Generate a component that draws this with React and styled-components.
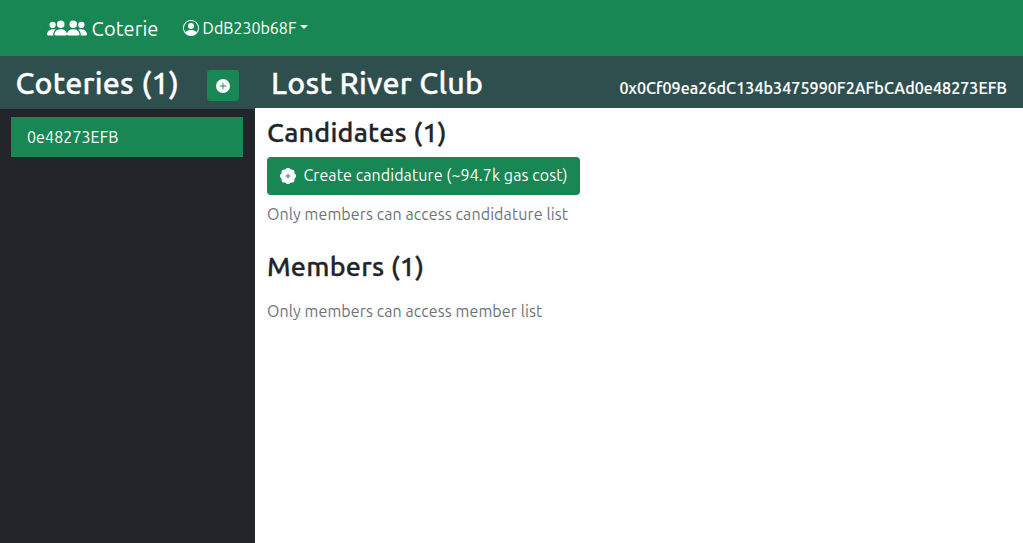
import React from "react";
import styled, { createGlobalStyle } from "styled-components";
import { BsPeopleFill, BsPersonCircle, BsPlusCircleFill, BsPatchPlusFill } from "react-icons/bs";

const GlobalStyle = createGlobalStyle`
  *, *::before, *::after { box-sizing: border-box; }
  body {
    margin: 0;
    overflow: hidden;
    background: #fff;
    color: #212529;
    font: 400 16px/24px Ubuntu, "Noto Sans", sans-serif;
    letter-spacing: 0.09px;
  }
  svg { flex: none; display: block; }
  h1, h2, p { margin: 0; white-space: nowrap; }
  button { font: inherit; letter-spacing: inherit; border: 0; cursor: pointer; }
`;

const Page = styled.div`
  height: 100vh;
  display: flex;
  flex-direction: column;
`;

const Navbar = styled.nav`
  height: 56px;
  flex: none;
  display: flex;
  align-items: center;
  padding-left: 47px;
  background: #198754;
  color: #fff;
`;

const Brand = styled.div`
  width: 136px;
  display: flex;
  align-items: center;
  font-size: 20px;
  line-height: 30px;
  padding-top: 1px;

  svg { margin-bottom: 1px; }
`;

const FlippedPeople = styled(BsPeopleFill)`
  transform: scaleX(-1);
`;

const Label = styled.span`
  white-space: nowrap;
  margin-left: ${(p) => p.$gap || 0}px;
`;

const Account = styled.div`
  display: flex;
  align-items: center;
  letter-spacing: 0;
`;

const Caret = styled.i`
  margin: 0 0 2px 4px;
  border: 4.8px solid transparent;
  border-top-color: #fff;
  border-bottom: 0;
`;

const Body = styled.div`
  flex: 1;
  display: flex;
  min-height: 0;
`;

const Sidebar = styled.aside`
  width: 255px;
  flex: none;
  background: #212529;
`;

const Main = styled.main`
  flex: 1;
  min-width: 0;
`;

const Header = styled.header`
  height: ${(p) => p.$height}px;
  padding: 0 16px 0 ${(p) => p.$left}px;
  display: flex;
  justify-content: space-between;
  background: #2f4f4f;
  color: #fff;
`;

const Title = styled.h1`
  font-size: calc(1.325rem + 0.9vw);
  line-height: 38px;
  padding-top: 8px;
  font-weight: 500;
  letter-spacing: 0.24px;
  -webkit-text-stroke: 0.3px currentColor;
`;

const AddButton = styled.button`
  width: 32px;
  height: 31px;
  margin-top: 14px;
  padding: 1px 0 0;
  display: grid;
  place-items: center;
  border-radius: 3.2px;
  background: #198754;
  color: #fff;
`;

const Address = styled.p`
  padding-top: 20px;
  font-weight: 500;
  -webkit-text-stroke: 0.15px currentColor;
`;

const CoterieItem = styled.div`
  height: 40px;
  margin: 8px 12px 0 11px;
  padding: 8px 16px;
  background: #198754;
  color: #fff;
`;

const Content = styled.div`
  padding: 8px 12px;
`;

const Section = styled.section`
  margin-bottom: 24px;
`;

const Heading = styled.h2`
  font-size: calc(1.3rem + 0.6vw);
  line-height: 32px;
  padding-bottom: 2px;
  font-weight: 500;
  letter-spacing: 0.22px;
  -webkit-text-stroke: 0.3px currentColor;
`;

const CreateButton = styled.button`
  height: 38px;
  margin-top: 7px;
  padding: 0 12.3px 0 13px;
  display: flex;
  align-items: center;
  border-radius: 4px;
  background: #198754;
  color: #fff;

  span { margin-bottom: 2px; }
`;

const Note = styled.p`
  padding-top: ${(p) => p.$top}px;
  color: #6c757d;
  letter-spacing: 0.1px;
`;

export default function App() {
  return (
    <Page>
      <GlobalStyle />
      <Navbar>
        <Brand>
          <BsPeopleFill size={20} />
          <FlippedPeople size={20} />
          <Label $gap={4.6}>Coterie</Label>
        </Brand>
        <Account>
          <BsPersonCircle size={16} />
          <Label $gap={3.6}>DdB230b68F</Label>
          <Caret />
        </Account>
      </Navbar>
      <Body>
        <Sidebar>
          <Header $height={53} $left={15.4}>
            <Title>Coteries (1)</Title>
            <AddButton aria-label="Create coterie"><BsPlusCircleFill size={14} /></AddButton>
          </Header>
          <CoterieItem><Label>0e48273EFB</Label></CoterieItem>
        </Sidebar>
        <Main>
          <Header $height={52} $left={16}>
            <Title>Lost River Club</Title>
            <Address>0x0Cf09ea26dC134b3475990F2AFbCAd0e48273EFB</Address>
          </Header>
          <Content>
            <Section>
              <Heading>Candidates (1)</Heading>
              <CreateButton>
                <BsPatchPlusFill size={16} />
                <Label $gap={7.4}>Create candidature (~94.7k gas cost)</Label>
              </CreateButton>
              <Note $top={7}>Only members can access candidature list</Note>
            </Section>
            <Section>
              <Heading>Members (1)</Heading>
              <Note $top={15}>Only members can access member list</Note>
            </Section>
          </Content>
        </Main>
      </Body>
    </Page>
  );
}
